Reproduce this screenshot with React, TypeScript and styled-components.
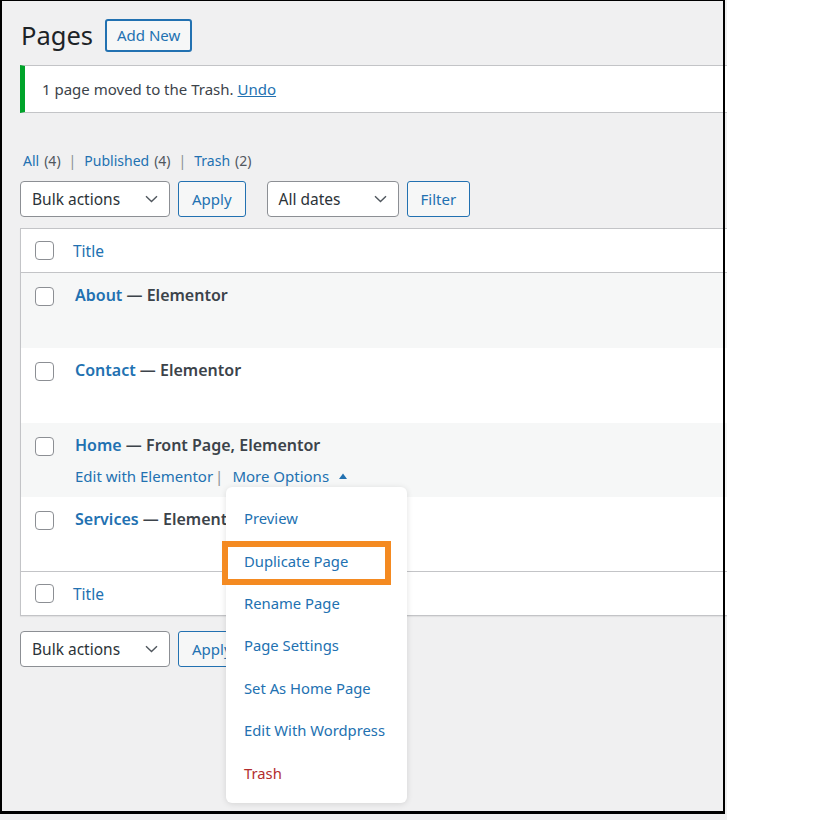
import React from "react";
import styled, { createGlobalStyle } from "styled-components";

const GlobalStyle = createGlobalStyle`
  html, body { margin: 0; padding: 0; background: #ffffff; }
  * { box-sizing: border-box; }
`;

const Screen = styled.div`
  position: relative;
  width: 727px;
  height: 820px;
  background: #f0f0f1;
  overflow: hidden;
  font-family: "Noto Sans", "Open Sans", sans-serif;
  color: #3c434a;
`;

const Frame = styled.div`
  position: absolute;
  left: 0;
  top: 0;
  width: 725px;
  height: 814px;
  border-style: solid;
  border-color: #000;
  border-width: 1px 2px 3px 2px;
  pointer-events: none;
  z-index: 10;
`;

const Wrap = styled.div`
  padding: 19px 0 0 20px;
  display: flex;
  flex-direction: column;
`;

const HeadingRow = styled.div`
  display: flex;
  align-items: center;
  gap: 12px;
  height: 33px;
  padding-left: 1px;
`;

const Heading = styled.h1`
  margin: 0;
  font-size: 25.5px;
  font-weight: 400;
  color: #1d2327;
  line-height: 33px;
`;

const OutlineButton = styled.button`
  height: ${(p: { $h?: number }) => p.$h ?? 36}px;
  padding: 0 13px;
  border: 1px solid #2271b1;
  border-radius: 3px;
  background: #f6f7f7;
  color: #2271b1;
  font-family: inherit;
  font-size: 15px;
  line-height: 1;
`;

const AddNew = styled(OutlineButton)`
  border-width: 2px;
  padding: 0 10px;
  font-size: 15px;
`;

const Notice = styled.div`
  margin-top: 13px;
  width: 760px;
  height: 48px;
  background: #fff;
  border: 1px solid #c3c4c7;
  border-left: 5px solid #00a32a;
  display: flex;
  align-items: center;
  padding-left: 17px;
  font-size: 15px;
  color: #3c434a;
`;

const Link = styled.a`
  color: #2271b1;
  text-decoration: ${(p: { $u?: boolean }) => (p.$u ? "underline" : "none")};
  margin-left: ${(p: { $u?: boolean }) => (p.$u ? "4px" : "0")};
`;

const Subsub = styled.div`
  margin-top: 37px;
  height: 20px;
  display: flex;
  align-items: center;
  padding-left: 3px;
  font-size: 14px;
  color: #50575e;
`;

const Count = styled.span`
  color: #50575e;
  margin-left: 5px;
`;

const Sep = styled.span`
  color: #8c8f94;
  margin: 0 8px;
`;

const TableNav = styled.div`
  margin-top: ${(p: { $mt: number }) => p.$mt}px;
  display: flex;
  align-items: center;
  height: 36px;
`;

const Select = styled.div`
  width: ${(p: { $w: number; $ml?: number }) => p.$w}px;
  height: 36px;
  background: #fff;
  border: 1px solid #8c8f94;
  border-radius: 4px;
  display: flex;
  align-items: center;
  justify-content: space-between;
  padding: 0 11px 0 11px;
  font-size: 15.5px;
  color: #2c3338;
  margin-left: ${(p: { $w: number; $ml?: number }) => p.$ml ?? 0}px;
  margin-right: 8px;
`;

const Chevron = () => (
  <svg width="13" height="8" viewBox="0 0 13 8" fill="none">
    <path d="M1 1.2l5.5 5.3L12 1.2" stroke="#50575e" strokeWidth="1.4" />
  </svg>
);

const Table = styled.div`
  margin-top: 11px;
  width: 760px;
  border: 1px solid #c3c4c7;
  background: #fff;
  box-shadow: 0 1px 1px rgba(0, 0, 0, 0.06);
  display: flex;
  flex-direction: column;
`;

const HeadRow = styled.div`
  height: 44px;
  display: flex;
  align-items: center;
  padding-left: 14px;
  background: #fff;
  border-bottom: ${(p: { $top?: boolean }) => (p.$top ? "1px solid #c3c4c7" : "none")};
  border-top: ${(p: { $top?: boolean }) => (p.$top ? "none" : "1px solid #c3c4c7")};
`;

const Check = styled.span`
  display: inline-block;
  flex: none;
  width: 19px;
  height: 19px;
  border: 1px solid #8c8f94;
  border-radius: 4px;
  background: #fff;
`;

const HeadTitle = styled.span`
  margin-left: 19px;
  font-size: 15.5px;
  color: #2271b1;
`;

const Row = styled.div`
  height: ${(p: { $h: number; $alt: boolean }) => p.$h}px;
  background: ${(p: { $h: number; $alt: boolean }) => (p.$alt ? "#f6f7f7" : "#fff")};
  display: flex;
  align-items: flex-start;
  padding: 14px 0 0 14px;
`;

const RowBody = styled.div`
  margin-left: 21px;
  display: flex;
  flex-direction: column;
  gap: 8px;
  margin-top: -3px;
`;

const RowTitle = styled.div`
  font-size: 16px;
  font-weight: 600;
  line-height: 23px;
  color: #3c434a;
  white-space: nowrap;
`;

const TitleLink = styled.span`
  color: #2271b1;
`;

const RowActions = styled.div`
  display: flex;
  align-items: center;
  font-size: 15px;
  line-height: 22px;
  color: #2271b1;
`;

const ActSep = styled.span`
  color: #8c8f94;
  margin: 0 9px 0 2px;
`;

const Caret = () => (
  <svg width="10" height="8" viewBox="0 0 10 8" style={{ marginLeft: 9 }}>
    <path d="M1 7L5 1.5 9 7z" fill="#2271b1" />
  </svg>
);

const Menu = styled.div`
  position: absolute;
  left: 226px;
  top: 487px;
  width: 181px;
  height: 316px;
  background: #fff;
  border-radius: 6px;
  box-shadow: 0 1px 6px rgba(0, 0, 0, 0.12);
  padding: 10px 0 9px;
  display: flex;
  flex-direction: column;
  z-index: 5;
`;

const MenuItem = styled.div`
  height: 42.5px;
  display: flex;
  align-items: center;
  padding-left: 18px;
  font-size: 14.8px;
  color: ${(p: { $danger?: boolean }) => (p.$danger ? "#b32d2e" : "#2271b1")};
  white-space: nowrap;
`;

const Highlight = styled.div`
  position: absolute;
  left: 222px;
  top: 541px;
  width: 169px;
  height: 44px;
  border: 6px solid #f48a21;
  z-index: 6;
  pointer-events: none;
`;

type RowData = { title: string; state: string; h: number; alt: boolean; actions?: boolean };

const rows: RowData[] = [
  { title: "About", state: "Elementor", h: 75, alt: true },
  { title: "Contact", state: "Elementor", h: 75, alt: false },
  { title: "Home", state: "Front Page, Elementor", h: 74, alt: true, actions: true },
  { title: "Services", state: "Elementor", h: 74, alt: false },
];

const menuItems = [
  "Preview",
  "Duplicate Page",
  "Rename Page",
  "Page Settings",
  "Set As Home Page",
  "Edit With Wordpress",
];

export default function App() {
  return (
    <>
      <GlobalStyle />
      <Screen>
        <Wrap>
          <HeadingRow>
            <Heading>Pages</Heading>
            <AddNew $h={33}>Add New</AddNew>
          </HeadingRow>
          <Notice>
            1 page moved to the Trash.<Link $u>Undo</Link>
          </Notice>
          <Subsub>
            <Link>All</Link>
            <Count>(4)</Count>
            <Sep>|</Sep>
            <Link>Published</Link>
            <Count>(4)</Count>
            <Sep>|</Sep>
            <Link>Trash</Link>
            <Count>(2)</Count>
          </Subsub>
          <TableNav $mt={11}>
            <Select $w={150}>
              Bulk actions
              <Chevron />
            </Select>
            <OutlineButton>Apply</OutlineButton>
            <Select $w={132} $ml={21}>
              All dates
              <Chevron />
            </Select>
            <OutlineButton>Filter</OutlineButton>
          </TableNav>
          <Table>
            <HeadRow $top>
              <Check />
              <HeadTitle>Title</HeadTitle>
            </HeadRow>
            {rows.map((r) => (
              <Row key={r.title} $h={r.h} $alt={r.alt}>
                <Check />
                <RowBody>
                  <RowTitle>
                    <TitleLink>{r.title}</TitleLink> — {r.state}
                  </RowTitle>
                  {r.actions && (
                    <RowActions>
                      Edit with Elementor<ActSep>|</ActSep>More Options
                      <Caret />
                    </RowActions>
                  )}
                </RowBody>
              </Row>
            ))}
            <HeadRow>
              <Check />
              <HeadTitle>Title</HeadTitle>
            </HeadRow>
          </Table>
          <TableNav $mt={15}>
            <Select $w={150}>
              Bulk actions
              <Chevron />
            </Select>
            <OutlineButton>Apply</OutlineButton>
          </TableNav>
        </Wrap>
        <Menu>
          {menuItems.map((m) => (
            <MenuItem key={m}>{m}</MenuItem>
          ))}
          <MenuItem $danger>Trash</MenuItem>
        </Menu>
        <Highlight />
        <Frame />
      </Screen>
    </>
  );
}
